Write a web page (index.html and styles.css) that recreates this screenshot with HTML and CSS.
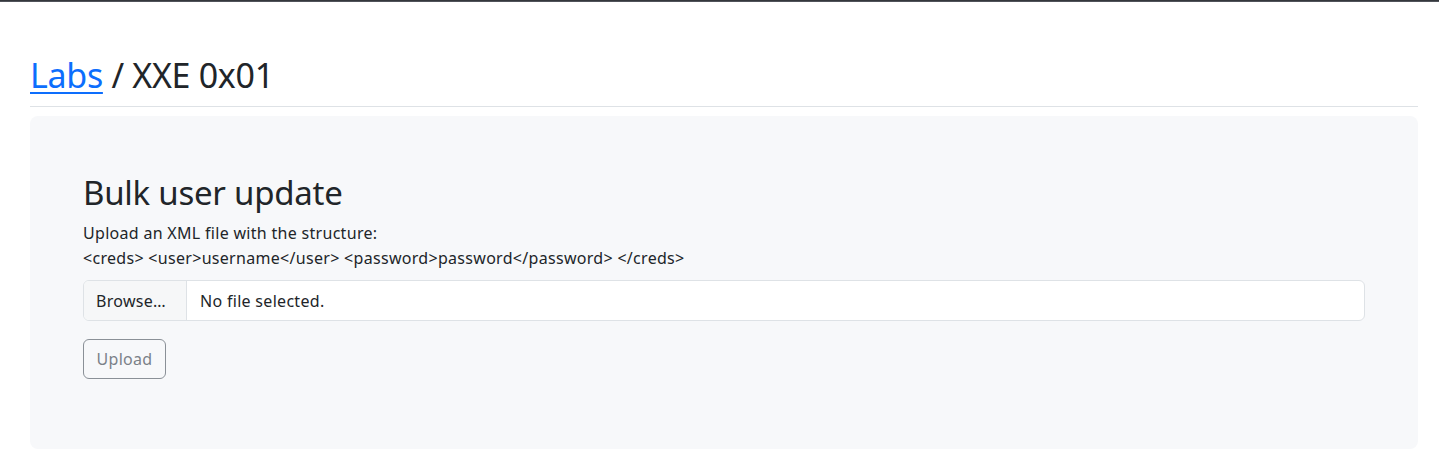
FILE: index.html
```html
<!DOCTYPE html>
<html lang="en">
<head>
<meta charset="utf-8">
<title>Labs / XXE 0x01</title>
<link rel="stylesheet" href="styles.css">
</head>
<body>
<div class="topbar"></div>
<main class="page">
  <h1 class="page-title"><a href="#" class="crumb">Labs</a> / XXE 0x01</h1>
  <section class="panel">
    <h2 class="panel-title">Bulk user update</h2>
    <p class="panel-text">Upload an XML file with the structure:<br>&lt;creds&gt; &lt;user&gt;username&lt;/user&gt; &lt;password&gt;password&lt;/password&gt; &lt;/creds&gt;</p>
    <div class="file-input">
      <span class="file-btn">Browse…</span>
      <span class="file-name">No file selected.</span>
    </div>
    <button class="upload-btn" disabled>Upload</button>
  </section>
</main>
</body>
</html>
```
FILE: styles.css
```css
* { box-sizing: border-box; }
html, body { margin: 0; padding: 0; }
body {
  font-family: "Noto Sans", "Open Sans", sans-serif;
  color: #212529;
  background: #fff;
  font-size: 16px;
  line-height: 1.5;
}
.topbar {
  height: 2px;
  background: #34373c;
  border-bottom: 1px solid #50535a;
}
.page {
  padding: 0 21px 0 30px;
}
.page-title {
  margin: 53px 0 0;
  font-size: 34px;
  font-weight: 400;
  line-height: 1.2;
  padding-bottom: 10px;
  border-bottom: 1px solid #dee2e6;
  letter-spacing: -0.3px;
}
.crumb {
  color: #0d6efd;
  text-decoration: underline;
  text-underline-offset: 4px;
  text-decoration-thickness: 2px;
}
.panel {
  margin-top: 9px;
  background: #f7f8fa;
  border-radius: 8px;
  padding: 57px 53px 70px;
}
.panel-title {
  margin: 0 0 9px;
  font-size: 33px;
  font-weight: 400;
  line-height: 1.2;
  letter-spacing: -0.25px;
}
.panel-text {
  margin: 0 0 9px;
  font-size: 16px;
  line-height: 25px;
  letter-spacing: 0.3px;
}
.file-input {
  display: flex;
  height: 41px;
  border: 1px solid #dee2e6;
  border-radius: 6px;
  background: #fff;
  overflow: hidden;
  font-size: 16px;
  letter-spacing: 0.3px;
}
.file-btn {
  display: flex;
  align-items: center;
  padding: 0 12px;
  width: 103px;
  background: #f6f7f8;
  border-right: 1px solid #dee2e6;
}
.file-name {
  display: flex;
  align-items: center;
  padding: 0 13px;
}
.upload-btn {
  margin-top: 18px;
  height: 40px;
  width: 83px;
  font-family: inherit;
  font-size: 16px;
  letter-spacing: 0.3px;
  color: #7b8188;
  background: transparent;
  border: 1px solid #8a9097;
  border-radius: 6px;
  padding: 0;
}
```
